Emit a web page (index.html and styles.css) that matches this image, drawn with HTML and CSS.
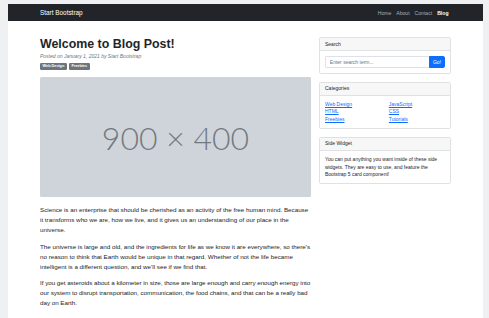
FILE: index.html
```html
<!DOCTYPE html>
<html lang="en">
<head>
<meta charset="utf-8">
<title>Blog Post - Start Bootstrap</title>
<link rel="stylesheet" href="styles.css">
</head>
<body>
<div class="page">
  <nav class="navbar">
    <div class="container nav-inner">
      <a class="brand" href="#">Start Bootstrap</a>
      <ul class="nav">
        <li><a class="nav-link" href="#">Home</a></li>
        <li><a class="nav-link" href="#">About</a></li>
        <li><a class="nav-link" href="#">Contact</a></li>
        <li><a class="nav-link active" href="#">Blog</a></li>
      </ul>
    </div>
  </nav>
  <div class="container main">
    <div class="col-main">
      <article>
        <header class="post-header">
          <h1 class="post-title">Welcome to Blog Post!</h1>
          <div class="post-meta">Posted on January 1, 2021 by Start Bootstrap</div>
          <div class="badges">
            <a class="badge" href="#">Web Design</a>
            <a class="badge" href="#">Freebies</a>
          </div>
        </header>
        <figure class="post-figure">
          <div class="placeholder">900 × 400</div>
        </figure>
        <section class="post-body">
          <p>Science is an enterprise that should be cherished as an activity of the free human mind. Because it transforms who we are, how we live, and it gives us an understanding of our place in the universe.</p>
          <p>The universe is large and old, and the ingredients for life as we know it are everywhere, so there's no reason to think that Earth would be unique in that regard. Whether of not the life became intelligent is a different question, and we'll see if we find that.</p>
          <p class="tight">If you get asteroids about a kilometer in size, those are large enough and carry enough energy into our system to disrupt transportation, communication, the food chains, and that can be a really bad day on Earth.</p>
        </section>
      </article>
    </div>
    <aside class="col-side">
      <div class="card">
        <div class="card-header">Search</div>
        <div class="card-body">
          <div class="input-group">
            <input class="form-control" type="text" placeholder="Enter search term...">
            <button class="btn" type="button">Go!</button>
          </div>
        </div>
      </div>
      <div class="card">
        <div class="card-header">Categories</div>
        <div class="card-body">
          <div class="cat-grid">
            <ul class="cat-list">
              <li><a href="#">Web Design</a></li>
              <li><a href="#">HTML</a></li>
              <li><a href="#">Freebies</a></li>
            </ul>
            <ul class="cat-list">
              <li><a href="#">JavaScript</a></li>
              <li><a href="#">CSS</a></li>
              <li><a href="#">Tutorials</a></li>
            </ul>
          </div>
        </div>
      </div>
      <div class="card">
        <div class="card-header">Side Widget</div>
        <div class="card-body">You can put anything you want inside of these side widgets. They are easy to use, and feature the Bootstrap 5 card component!</div>
      </div>
    </aside>
  </div>
</div>
</body>
</html>
```
FILE: styles.css
```css
html, body {
  margin: 0;
  height: 100%;
}
body {
  background: #eff0f2;
  padding: 4px 6px 0 8px;
  box-sizing: border-box;
  font-family: "Liberation Sans", Arial, sans-serif;
  color: #212529;
  overflow: hidden;
}
.page {
  background: #fff;
  min-height: 314px;
}
.container {
  width: 411px;
  margin: 0 auto;
}
.navbar {
  background: #212529;
  height: 17px;
}
.nav-inner {
  height: 100%;
  display: flex;
  align-items: center;
  justify-content: space-between;
}
.brand {
  color: #fff;
  font-size: 6.4px;
  text-decoration: none;
}
.nav {
  display: flex;
  list-style: none;
  margin: 0;
  padding: 0;
}
.nav-link {
  display: block;
  padding: 0 2.5px;
  font-size: 5.1px;
  color: rgba(255, 255, 255, 0.6);
  text-decoration: none;
}
.nav-link.active {
  color: #fff;
  font-weight: bold;
}
.main {
  display: flex;
  gap: 8px;
  padding-top: 16px;
}
.col-main {
  width: 271px;
  flex: none;
}
.col-side {
  width: 132px;
  flex: none;
}
.post-title {
  margin: 0 0 1.3px;
  font-size: 12.4px;
  line-height: 1.2;
  font-weight: bold;
  color: #212529;
}
.post-meta {
  font-size: 5px;
  line-height: 7.6px;
  font-style: italic;
  color: #6c757d;
  margin-bottom: 2.5px;
}
.badges {
  display: flex;
  gap: 2px;
  margin-bottom: 7.6px;
}
.badge {
  display: inline-block;
  background: #6c757d;
  color: #fff;
  font-size: 3.8px;
  font-weight: bold;
  line-height: 1;
  padding: 1.4px 2.6px;
  border-radius: 1.2px;
  text-decoration: none;
}
.post-figure {
  margin: 0 0 7.6px;
}
.placeholder {
  height: 120px;
  background: #ced4da;
  border-radius: 1.5px;
  display: flex;
  align-items: center;
  justify-content: center;
  font-family: Lato, "Open Sans", sans-serif;
  font-weight: 300;
  font-size: 32px;
  color: #74797f;
}
.post-body p {
  margin: 0 0 6.7px;
  font-size: 6.25px;
  line-height: 10px;
}
.post-body p.tight {
  letter-spacing: -0.025px;
}
.card {
  border: 1px solid #dfe1e3;
  border-radius: 1.9px;
  margin-bottom: 7.6px;
  font-size: 5px;
  line-height: 7.4px;
  overflow: hidden;
}
.card-header {
  padding: 2.5px 5px;
  background: #f7f7f7;
  border-bottom: 1px solid #dfe1e3;
}
.card-body {
  padding: 5px;
}
.input-group {
  display: flex;
  height: 11.5px;
}
.form-control {
  flex: 1;
  min-width: 0;
  border: 1px solid #dee2e6;
  border-right: none;
  border-radius: 1.9px 0 0 1.9px;
  padding: 0 3.8px;
  font-family: inherit;
  font-size: 5px;
  color: #212529;
  outline: none;
}
.form-control::placeholder {
  color: #6c757d;
}
.btn {
  width: 16px;
  border: 1px solid #0d6efd;
  background: #0d6efd;
  color: #fff;
  font-family: inherit;
  font-size: 5px;
  padding: 0;
  border-radius: 0 1.9px 1.9px 0;
}
.cat-grid {
  display: grid;
  grid-template-columns: 1fr 1fr;
  column-gap: 7.6px;
}
.cat-list {
  list-style: none;
  margin: 0;
  padding: 0;
}
.cat-list a {
  color: #0d6efd;
}
```
